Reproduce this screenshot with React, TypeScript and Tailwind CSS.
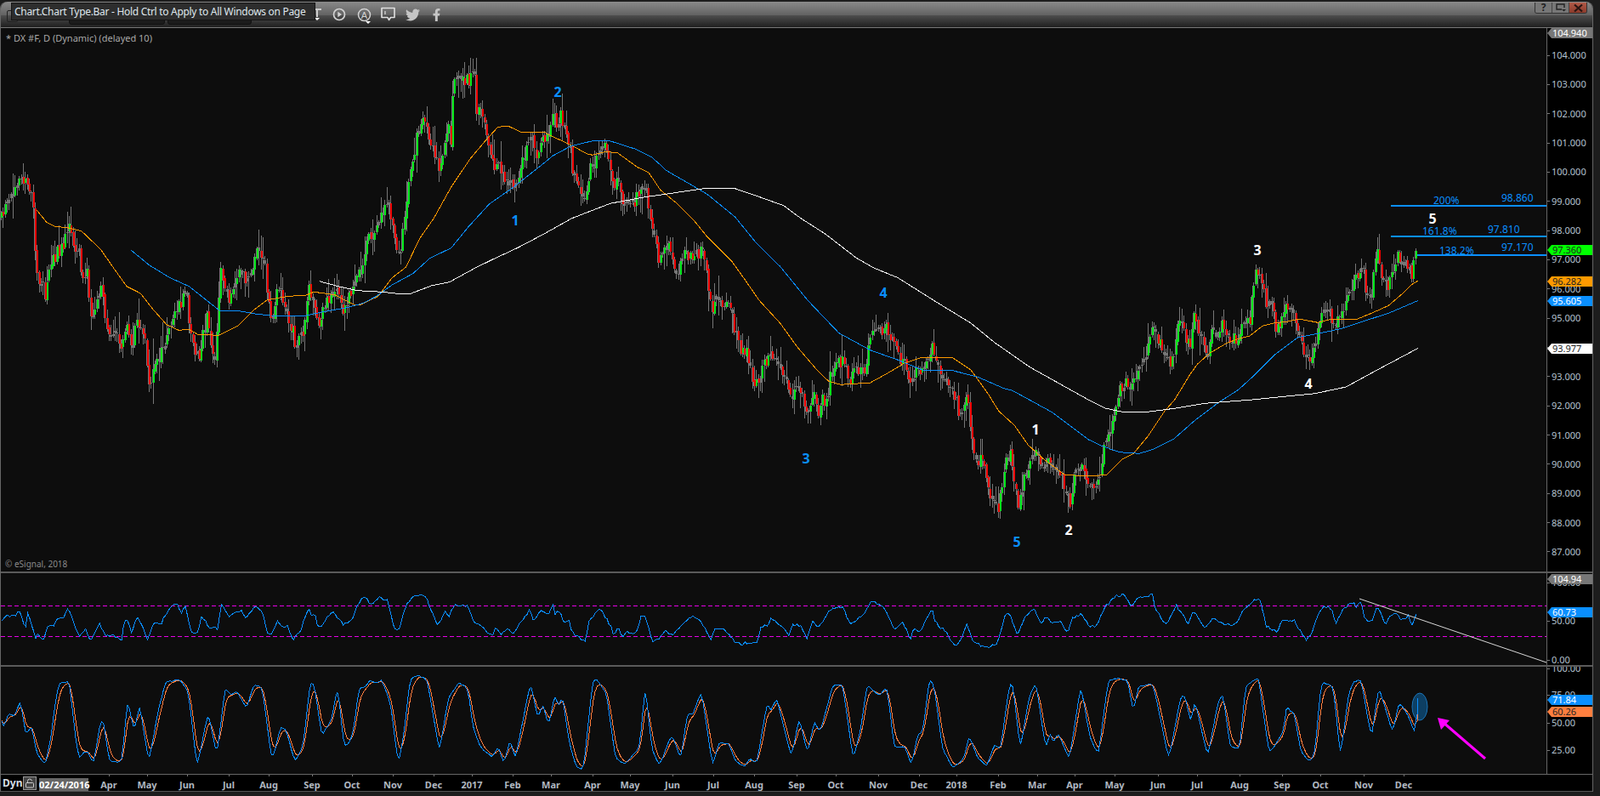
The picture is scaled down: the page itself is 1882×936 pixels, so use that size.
import React from "react";
import { FaTwitter, FaFacebookF } from "react-icons/fa";
import { LockOpen } from "lucide-react";

type P = [number, number];
const pts = (a: number[], ox: number, oy: number, sx: number, sy: number): P[] => {
  const r: P[] = [];
  for (let i = 0; i + 1 < a.length; i += 2) r.push([ox + a[i] / sx, oy + a[i + 1] / sy]);
  return r;
};
const join = (...ls: P[][]): P[] => {
  const r: P[] = [];
  ls.forEach((l) => l.forEach((p) => { if (!r.length || p[0] > r[r.length - 1][0]) r.push(p); }));
  return r;
};
const z7 = (a: number[]) => pts(a, 0, 60, 2.45, 3);
const z6 = (a: number[]) => pts(a, 480, 60, 3, 3);
const z8 = (a: number[]) => pts(a, 640, 200, 2.45, 3);
const z9 = (a: number[]) => pts(a, 1200, 260, 3, 3);
const z5 = (a: number[]) => pts(a, 0, 650, 3, 3);
const z10 = (a: number[]) => pts(a, 390, 675, 2.8, 3);
const z11 = (a: number[]) => pts(a, 950, 675, 2.8, 3);
const z4 = (a: number[]) => pts(a, 1500, 660, 3, 3);

const price = join(
  z7([5,590,20,525,50,470,80,465,95,540,100,700,105,780,130,860,145,750,180,680,197,605,215,710,230,720,235,830,250,780,260,950,290,820,305,980,340,1000,350,1050,365,960,380,1050,395,940,415,1010,430,1180,445,1080,470,1060,495,930,535,860,555,1050,570,1090,595,940,605,1010,620,1080,635,780,650,860,665,870,690,780,710,820,745,690,765,770,770,890,785,940,800,810,835,960,850,1030,875,980,890,840,915,960,940,880,965,840,985,910,1020,840,1045,750,1060,640,1075,650,1090,600,1118,545,1130,600,1145,720,1155,700,1170,530,1185,420,1200,300,1220,250,1240,320,1262,410,1275,380,1290,260,1298,320,1305,120,1325,95,1350,100,1368,90,1370,230,1380,200,1395,250,1420,390,1450,440,1475,480,1500,410,1530,290,1545,380]),
  z6([450,360,470,290,490,310,510,210,525,270,540,215,555,310,570,330,575,400,600,480,620,530,640,420,665,385,690,320,705,360,720,480,745,445,750,520,770,550,800,530,820,480,840,490,855,580]),
  z8([225,110,260,120,275,165,285,60,295,70,305,210,320,270,330,320,360,270,380,350,395,340,405,290,430,320,445,285,465,310,470,410,485,490,495,425,510,460,535,470,550,580,570,650,585,640,600,750,620,770,625,690,660,660,685,720,700,760,710,810,725,750,745,810,758,890,775,790,790,870,800,800,815,820,825,720,860,660,880,745,905,700,920,720,942,580,955,580,985,550,1005,620,1020,650,1045,710,1058,755,1075,710,1095,715,1110,640,1122,625,1130,690,1145,710,1160,740,1180,790,1195,870,1220,810,1232,970,1250,1030,1265,1020,1280,1130,1310,1190,1330,1020,1345,1010,1365,1190,1385,1070,1410,1000,1420,985,1435,1070,1450,1030,1480,1060,1515,1180,1525,1070,1550,1040,1568,1100]),
  z9([240,930,265,945,285,900,295,790,315,740,335,640,350,600,375,555,395,600,405,545,440,480,470,370,490,435,515,500,545,490,550,350,570,380,600,440,610,340,640,410,660,470,675,400,700,380,720,360,725,420,750,420,770,410,785,345,810,340,830,180,850,185,860,260,865,320,885,290,905,395,920,340,935,310,965,320,985,410,1015,500,1040,460,1048,395,1065,310,1085,300,1110,370,1135,320,1150,280,1170,240,1185,200,1210,150,1215,230,1240,260,1250,170,1262,90,1270,170,1295,230,1310,180,1335,110,1350,160,1385,190,1390,120,1400,100])
);
const ma50 = join(
  z7([105,560,135,605,160,620,190,622,235,635,290,700,330,770,365,830,405,855,440,910,480,965,515,985,545,982,570,1000,630,1003,685,970,730,915,770,878,830,865,880,862,905,850,965,860,1020,895,1040,895,1090,865,1130,800,1170,762,1210,660,1250,590,1300,480,1355,380,1400,315,1435,268,1465,265,1505,288,1568,285]),
  z6([500,297,550,320,590,340,630,362,650,367,700,355,740,360,810,410,850,430,890,490]),
  z8([333,70,380,115,430,175,470,235,540,320,575,380,620,460,680,540,730,625,790,710,820,745,855,757,940,750,985,720,1040,680,1090,660,1175,660,1230,705,1280,790,1310,850,1355,900,1395,970,1440,1020,1500,1075,1568,1080]),
  z9([305,895,360,840,400,820,450,760,510,670,545,630,600,540,625,505,670,465,730,430,770,415,810,405,855,370,895,360,940,355,985,345,1050,358,1100,345,1190,345,1240,325,1300,298,1350,255,1380,225,1405,210])
);
const ma100 = join(
  z7([378,703,430,755,490,800,545,830,632,915,680,915,740,928,780,933,875,935,930,920,1000,905,1045,890,1085,865,1130,825,1190,785,1240,730,1300,695,1350,620,1410,540,1480,480,1568,395]),
  z6([510,370,575,335,660,315,715,318,800,345,860,375,900,410]),
  z8([350,0,400,35,470,85,550,165,610,255,680,340,760,460,850,575,940,635,1020,670,1090,705,1180,708,1250,730,1325,770,1350,778,1465,855,1568,950]),
  z9([280,790,350,815,420,820,470,805,540,770,620,700,700,640,770,595,830,540,900,470,980,410,1050,397,1130,380,1190,360,1300,325,1405,280])
);
const ma200 = join(
  z7([920,812,975,830,1030,845,1100,850,1140,855,1185,855,1245,827,1295,815,1370,765,1420,735,1490,695,1568,645]),
  z8([80,170,190,118,290,95,350,85,460,65,550,65,610,90,690,125,740,170,810,225,900,310,950,345,1020,380,1130,465,1230,540,1300,610,1400,695,1568,810]),
  z9([300,660,360,673,450,673,550,660,650,643,820,630,1040,608,1150,585,1260,525,1405,448])
);
const rsi = join(
  z5([5,240,30,222,60,220,65,197,90,265,97,212,110,250,125,305,130,285,155,308,170,255,190,260,200,230,220,235,235,203,245,205,262,255,285,297,300,262,318,312,350,245,370,293,400,293,430,310,438,240,450,245,465,280,483,222,505,265,522,310,545,240,570,250,585,215,605,187,630,185,640,215,655,185,675,280,695,290,712,225,720,235,745,270,755,255,768,275,780,185,810,222,850,203,868,228,905,185,930,220,945,290,955,295,980,235,995,265,1015,260,1035,305,1045,290,1060,285,1075,225,1090,200,1100,225,1112,220,1122,270,1150,235,1175,210,1190,230]),
  z10([40,180,70,155,90,100,110,78,125,108,160,82,185,95,205,190,220,205,240,125,260,85,305,70,330,130,350,185,375,130,385,155,405,105,450,115,470,180,480,170,530,220,540,185,560,210,578,188,595,215,635,150,655,125,667,170,685,130,715,145,728,98,735,145,752,125,765,180,780,155,790,205,835,235,850,160,885,120,920,185,930,215,945,185,958,225,965,208,1005,205,1020,150,1035,150,1055,235,1075,235,1100,200,1125,215,1165,165,1190,150,1205,155,1235,200,1250,232,1265,190,1300,200,1330,240,1350,245,1385,245,1405,235,1415,185,1435,180,1450,155,1480,180,1505,215,1520,178,1545,180,1568,230]),
  z11([15,160,30,190,50,165,75,125,115,115,140,175,180,150,210,95,250,120,285,195,315,170,338,228,350,190,370,205,410,125,420,170,455,205,490,258,500,235,525,178,545,240,590,260,625,245,650,145,665,135,690,218,715,150,745,125,770,178,785,150,810,175,830,165,858,210,870,155,905,140,925,185,950,185,980,115,1020,75,1045,70,1065,120,1085,85,1138,72,1145,125,1180,180,1215,110,1255,178,1270,125,1310,190,1335,150,1375,180,1410,180,1435,125,1465,95,1490,90,1510,185,1545,205]),
  z4([20,220,35,198,50,215,65,205,90,250,112,278,130,255,148,195,170,158,200,165,212,225,240,170,278,140,285,165,303,135,315,200,338,218,360,155,390,225,400,200,430,178,438,208,470,195,485,228,495,190,505,181])
);
const stoch = join(
  z5([5,580,12,625,30,565,50,580,72,518,92,650,110,605,130,710,160,750,180,650,200,490,212,458,245,455,265,640,278,730,290,708,310,700,330,745,355,590,365,590,385,735,430,738,450,518,475,635,492,530,525,740,560,550,585,455,635,448,665,490,695,760,735,560,765,718,795,473,815,505,835,485,870,550,895,465,925,472,960,740,990,610,1010,625,1040,738,1070,680,1095,450,1110,470,1135,645,1170,590,1190,475,1200,545]),
  z10([40,605,55,605,72,555,90,402,110,400,125,375,150,385,165,372,195,460,220,678,240,550,258,370,285,355,315,375,355,625,385,435,420,383,450,405,465,540,490,610,530,648,548,605,568,672,588,580,605,655,655,380,680,515,695,452,715,538,735,420,748,475,760,420,780,580,805,682,830,688,860,375,875,372,905,420,935,650,965,672,1015,612,1033,388,1055,620,1080,677,1115,578,1125,575,1150,655,1172,490,1190,495,1218,412,1255,680,1275,595,1310,600,1330,660,1360,680,1378,650,1400,670,1435,450,1447,485,1465,435,1515,648,1540,505,1568,635]),
  z11([22,515,40,560,75,425,80,395,115,388,150,655,175,545,195,392,235,428,262,398,285,615,320,605,342,678,362,565,380,555,400,372,415,385,445,620,480,685,515,650,532,568,560,650,590,677,615,600,635,620,665,385,675,385,700,620,730,430,752,382,785,625,798,550,808,600,825,560,862,655,900,392,930,580,958,635,990,375,1020,368,1055,375,1072,492,1090,395,1138,388,1190,655,1230,425,1245,435,1262,530,1275,445,1318,645,1350,460,1367,420,1392,610,1423,618,1442,395,1485,365,1520,635]),
  z4([30,600,40,505,55,535,65,522,90,670,120,708,140,680,162,425,205,440,230,690,260,460,278,425,303,418,340,628,365,442,415,605,437,495,470,545,492,605])
);

const at = (l: P[], x: number) => {
  if (x <= l[0][0]) return l[0][1];
  for (let i = 1; i < l.length; i++) {
    if (x <= l[i][0]) {
      const [a, b] = [l[i - 1], l[i]];
      return a[1] + ((b[1] - a[1]) * (x - a[0])) / (b[0] - a[0]);
    }
  }
  return l[l.length - 1][1];
};
let seed = 20180112;
const rnd = () => {
  seed = (seed * 1664525 + 1013904223) % 4294967296;
  return seed / 4294967296;
};
const toPath = (l: P[]) => l.map((p, i) => `${i ? "L" : "M"}${p[0].toFixed(1)} ${p[1].toFixed(1)}`).join("");

const STEP = 2.35;
let greyPath = "", greenPath = "", redPath = "";
{
  let prev = at(price, 1);
  for (let x = 1; x <= 1667; x += STEP) {
    const m = at(price, x);
    const close = m + (rnd() - 0.5) * 16;
    const open = prev + (rnd() - 0.5) * 5;
    const top = Math.min(open, close), bot = Math.max(open, close);
    const extra = rnd() < 0.05 ? 18 : 0;
    const hi = top - 2 - rnd() * rnd() * 24 - (rnd() < 0.5 ? extra : 0);
    const lo = bot + 2 + rnd() * rnd() * 24 + extra * rnd();
    const px = Math.round(x);
    greyPath += `M${px} ${hi.toFixed(0)}h1V${lo.toFixed(0)}h-1z`;
    const h = Math.max(bot - top, 1).toFixed(0);
    const t = top.toFixed(0);
    greyPath += `M${px - 1} ${t}h3v${h}h-3z`;
    if (bot - top > 5) {
      if (close < open) greenPath += `M${px} ${t}h2v${h}h-2z`;
      else redPath += `M${px} ${t}h2v${h}h-2z`;
    }
    prev = close;
  }
}
const rsiLine: P[] = [];
for (let x = 2; x <= 1668; x += STEP) rsiLine.push([x, at(rsi, x) + (rnd() - 0.5) * 3.6]);
const kRaw: P[] = [];
for (let x = 2; x <= 1664; x += STEP) kRaw.push([x, at(stoch, x)]);
const kLine: P[] = kRaw.map((p, i) => {
  const a = kRaw[Math.max(i - 1, 0)][1], b = kRaw[Math.min(i + 1, kRaw.length - 1)][1];
  return [p[0], (a + 4 * p[1] + b) / 6 + (rnd() - 0.5) * 1.2] as P;
});
const dLine: P[] = [];
{
  let e = kLine[0][1];
  kLine.forEach((p) => {
    e = e + (p[1] - e) * 0.45;
    dLine.push([p[0], e]);
  });
}
kLine.push([1667, 840], [1668, 821]);
dLine.push([1667, 848], [1668, 837]);

const priceY = (v: number) => 65 + (104 - v) * 34.35;
const BLUE = "#0a8fff";

const waves: [string, number, number, boolean][] = [
  ["1", 606, 259, true], ["2", 656, 108, true], ["3", 948, 539, true], ["4", 1039, 344, true], ["5", 1196, 637, true],
  ["1", 1218, 505, false], ["2", 1257, 623, false], ["3", 1479, 294, false], ["4", 1539, 451, false], ["5", 1685, 257, false],
];
const fibs: [string, number, number][] = [
  ["200%", 1686, 236], ["98.860", 1766, 233], ["161.8%", 1673, 272], ["97.810", 1750, 269.5], ["138.2%", 1693, 295], ["97.170", 1766, 291],
];
const months: [string, number][] = [
  ["Apr",128],["May",173],["Jun",220],["Jul",269],["Aug",316],["Sep",367],["Oct",414],["Nov",462],["Dec",510],["2017",555],["Feb",603],["Mar",648],["Apr",697],["May",741],["Jun",791],["Jul",839],["Aug",887],["Sep",937],["Oct",983],["Nov",1033],["Dec",1081],["2018",1125],["Feb",1174],["Mar",1220],["Apr",1264],["May",1311],["Jun",1362],["Jul",1408],["Aug",1458],["Sep",1508],["Oct",1553],["Nov",1604],["Dec",1651],
];
const ints = Array.from({ length: 18 }, (_, i) => 104 - i);

function AxisLabel({ y, text }: { y: number; text: string }) {
  return (
    <div className="absolute left-0 flex items-center h-[12px]" style={{ top: y - 6 }}>
      <span className="w-[3px] h-px bg-[#777]" />
      <span className="ml-[2px] text-[11px] leading-[12px] text-[#b4c2d0]">{text}</span>
    </div>
  );
}
function Tag({ y, text, cls }: { y: number; text: string; cls: string }) {
  return (
    <div
      className={`absolute left-0 w-[53px] h-[12px] pl-[6px] text-[11px] leading-[12px] [clip-path:polygon(5px_0,100%_0,100%_100%,5px_100%,0_50%)] ${cls}`}
      style={{ top: y }}
    >
      {text}
    </div>
  );
}
function Caret() {
  return <span className="block w-0 h-0 border-l-[3px] border-r-[3px] border-t-[3px] border-l-transparent border-r-transparent border-t-white" />;
}

function TitleBar() {
  return (
    <div className="relative h-[31px] shrink-0 rounded-t-[8px] border-b border-[#777] bg-[linear-gradient(to_bottom,#8a8a8a_0%,#636363_52%,#4f4f4f_52%,#1f1f1f_100%)] flex items-center pl-[7px]">
      <div className="w-[13px] h-[14px] mt-[4px] border border-[#222] rounded-[2px]" />
      <div className="ml-[60px] self-end mb-[3px] w-[113px] h-[10px] rounded-b-[3px] border border-[#111] bg-[#1c1c1c]" />
      <div className="ml-[3px] self-end mb-[3px] w-[99px] h-[10px] rounded-b-[3px] border border-[#111] bg-[#1c1c1c]" />
      <div className="ml-[71px] relative w-[12px] h-[16px] flex flex-col items-center">
        <svg width="12" height="12" viewBox="0 0 12 12" fill="none">
          <path d="M1 1h10v2H7v8H5V3H1z" fill="#ccc" />
        </svg>
        <Caret />
      </div>
      <svg className="ml-[12px]" width="16" height="16" viewBox="0 0 16 16" fill="none">
        <circle cx="8" cy="8" r="6.5" stroke="#d2d2d2" strokeWidth="1.7" />
        <path d="M6.3 4.8v6.4L11 8z" fill="#d2d2d2" />
      </svg>
      <div className="ml-[13px] relative w-[17px] h-[17px]">
        <svg width="17" height="17" viewBox="0 0 17 17" fill="none">
          <circle cx="8.5" cy="8.5" r="7" stroke="#d2d2d2" strokeWidth="1.5" />
          <text x="8.5" y="12.5" textAnchor="middle" fontSize="11" fill="#d2d2d2" fontFamily="Liberation Sans, sans-serif">A</text>
        </svg>
        <span className="absolute -bottom-[2px] right-[1px]"><Caret /></span>
      </div>
      <svg className="ml-[11px]" width="17" height="18" viewBox="0 0 17 18" fill="none">
        <path d="M1 1.5h15v11h-4.5L9.5 15.5 8 12.5H1z" stroke="#e0e0e0" strokeWidth="1.6" strokeLinejoin="round" />
        <path d="M5 5v4" stroke="#e0e0e0" strokeWidth="1.2" />
      </svg>
      <FaTwitter className="ml-[12px] text-[#c6c6c6]" size={17} />
      <FaFacebookF className="ml-[12px] text-[#c6c6c6]" size={15} />
      <div className="absolute left-[12px] top-[1px] w-[358px] h-[21px] bg-[#2d2d2d] border border-[#151515] pl-[3px] flex items-center text-[12px] tracking-[-0.3px] text-[#dfe6ec] whitespace-nowrap">
        Chart.Chart Type.Bar - Hold Ctrl to Apply to All Windows on Page
      </div>
      <div className="absolute right-[6px] top-[1px] flex h-[13px] rounded-b-[3px] border border-t-0 border-[#333] overflow-hidden">
        <div className="w-[20px] flex items-center justify-center text-[12px] font-bold leading-none text-[#222] bg-[#777] border-r border-[#444]">?</div>
        <div className="w-[20px] flex items-center justify-center bg-[#777] border-r border-[#444]">
          <svg width="12" height="10" viewBox="0 0 12 10" fill="none">
            <path d="M7 7H1V1h9v4" stroke="#222" strokeWidth="1.4" />
            <path d="M7 7h5L9.5 9.5z" fill="#222" />
          </svg>
        </div>
        <div className="w-[20px] flex items-center justify-center bg-[linear-gradient(to_bottom,#b05a48,#8c3a2a)]">
          <svg width="11" height="9" viewBox="0 0 11 9"><path d="M1 0.5l9 8M10 0.5l-9 8" stroke="#2a1512" strokeWidth="2.2" /></svg>
        </div>
      </div>
    </div>
  );
}

function Panel1() {
  return (
    <div className="flex h-[639px] shrink-0">
      <div className="relative w-[1818px] bg-[#0d0d0d] overflow-hidden">
        <svg className="absolute inset-0" width="1818" height="639" viewBox="1 33 1818 639" shapeRendering="crispEdges">
          <path d={greyPath} fill="#767676" />
          <path d={greenPath} fill="#00e81a" />
          <path d={redPath} fill="#f00000" />
          <path d={toPath(ma50)} fill="none" stroke="#ff9a00" strokeWidth="1" />
          <path d={toPath(ma100)} fill="none" stroke={BLUE} strokeWidth="1" />
          <path d={toPath(ma200)} fill="none" stroke="#fff" strokeWidth="1" />
          <rect x="1636" y="241" width="183" height="2" fill={BLUE} />
          <rect x="1636" y="277" width="183" height="2" fill={BLUE} />
          <rect x="1667" y="299" width="152" height="2" fill={BLUE} />
        </svg>
        <div className="absolute left-[6px] top-[6px] text-[11px] leading-[12px] text-[#a8a8a8]">* DX #F, D (Dynamic) (delayed 10)</div>
        <div className="absolute left-[5px] top-[624px] text-[10px] leading-[12px] text-[#8a8a8a]">© eSignal, 2018</div>
        {waves.map(([t, x, y, b], i) => (
          <span
            key={i}
            className={`absolute -translate-x-1/2 -translate-y-1/2 text-[16px] font-bold leading-none ${b ? "text-[#0a8fff]" : "text-white"}`}
            style={{ left: x - 1, top: y - 33 }}
          >
            {t}
          </span>
        ))}
        {fibs.map(([t, x, y], i) => (
          <span key={i} className="absolute -translate-y-1/2 text-[12px] leading-none text-[#0a8fff]" style={{ left: x - 1, top: y - 33 }}>
            {t}
          </span>
        ))}
      </div>
      <div className="relative w-[54px] bg-black border-l border-[#666] overflow-hidden">
        {ints.map((v) => <AxisLabel key={v} y={priceY(v) - 33} text={`${v}.000`} />)}
        <Tag y={0} text="104.940" cls="bg-[#777] text-white" />
        <Tag y={255} text="97.360" cls="bg-[#00ff00] text-[#222]" />
        <Tag y={292} text="96.282" cls="bg-[#ff9a00] text-[#222]" />
        <Tag y={315} text="95.605" cls="bg-[#0a8fff] text-white" />
        <Tag y={371} text="93.977" cls="bg-white text-[#222]" />
      </div>
    </div>
  );
}
function Panel2() {
  return (
    <div className="flex h-[108px] shrink-0">
      <div className="relative w-[1818px] bg-[#0d0d0d] overflow-hidden">
        <svg className="absolute inset-0" width="1818" height="108" viewBox="1 674 1818 108" shapeRendering="crispEdges">
          <path d="M1 712.5H1819M1 748.5H1819" stroke="#e600e6" strokeWidth="1" strokeDasharray="5 3" fill="none" />
          <path d={toPath(rsiLine)} fill="none" stroke={BLUE} strokeWidth="1" />
          <path d="M1599 704L1819 779" stroke="#d8d8d8" strokeWidth="1" shapeRendering="auto" />
        </svg>
      </div>
      <div className="relative w-[54px] bg-black border-l border-[#666] overflow-hidden">
        <AxisLabel y={11} text="100.00" />
        <AxisLabel y={56} text="50.00" />
        <AxisLabel y={102} text="0.00" />
        <Tag y={1} text="104.94" cls="bg-[#777] text-white" />
        <Tag y={40} text="60.73" cls="bg-[#0a8fff] text-white" />
      </div>
    </div>
  );
}
function Panel3() {
  return (
    <div className="flex h-[127px] shrink-0 border-b border-[#666]">
      <div className="relative w-[1818px] bg-[#0d0d0d] overflow-hidden">
        <svg className="absolute inset-0" width="1818" height="126" viewBox="1 784 1818 126">
          <ellipse cx="1670" cy="831" rx="9" ry="16" fill="#0d3f63" stroke="#1a74b8" strokeWidth="1" />
          <g shapeRendering="crispEdges">
            <path d={toPath(dLine)} fill="none" stroke="#ff7f3f" strokeWidth="1" />
            <path d={toPath(kLine)} fill="none" stroke={BLUE} strokeWidth="1" />
          </g>
          <path d="M1747 892L1697 849" stroke="#ff00ff" strokeWidth="3" fill="none" />
          <path d="M1691 844L1705 847L1695 858z" fill="#ff00ff" />
        </svg>
      </div>
      <div className="relative w-[54px] bg-black border-l border-[#666] overflow-hidden">
        <AxisLabel y={2} text="100.00" />
        <AxisLabel y={33} text="75.00" />
        <AxisLabel y={66} text="50.00" />
        <AxisLabel y={98} text="25.00" />
        <Tag y={33} text="71.84" cls="bg-[#0a8fff] text-white" />
        <Tag y={47} text="60.26" cls="bg-[#ff7f3f] text-[#222]" />
      </div>
    </div>
  );
}
function TimeAxis() {
  return (
    <div className="relative h-[20px] shrink-0 bg-black border-b border-[#555] flex items-center pl-[2px]">
      {months.map(([t, x], i) => (
        <React.Fragment key={i}>
          <span className="absolute top-0 w-px h-[2px] bg-[#777]" style={{ left: x - 1 }} />
          <span className="absolute top-[5px] -translate-x-1/2 text-[11px] leading-[14px] font-bold text-[#b0b8c0]" style={{ left: x - 1 }}>{t}</span>
        </React.Fragment>
      ))}
      <span className="w-[22px] text-[12px] font-bold text-[#d5dde5] leading-none">Dyn</span>
      <div className="ml-[2px] w-[16px] h-[16px] border border-[#999] bg-[#444] flex items-center justify-center">
        <LockOpen size={12} className="text-[#ccc]" />
      </div>
      <div className="relative ml-[3px] mt-[4px] w-[58px] h-[15px] bg-[#666] text-white text-[11px] leading-[15px] font-bold text-center">02/24/2016</div>
    </div>
  );
}

export default function App() {
  return (
    <div className="w-[1882px] h-[936px] overflow-hidden bg-[#1d1d1d] pt-[2px] [font-family:'Liberation_Sans',Arial,sans-serif]">
      <div className="w-[1874px] flex flex-col border-l border-r border-[#666] rounded-t-[8px]">
        <TitleBar />
        <Panel1 />
        <div className="h-[2px] shrink-0 bg-[#5a5a5a]" />
        <Panel2 />
        <div className="h-[2px] shrink-0 bg-[#5a5a5a]" />
        <Panel3 />
        <TimeAxis />
      </div>
    </div>
  );
}
